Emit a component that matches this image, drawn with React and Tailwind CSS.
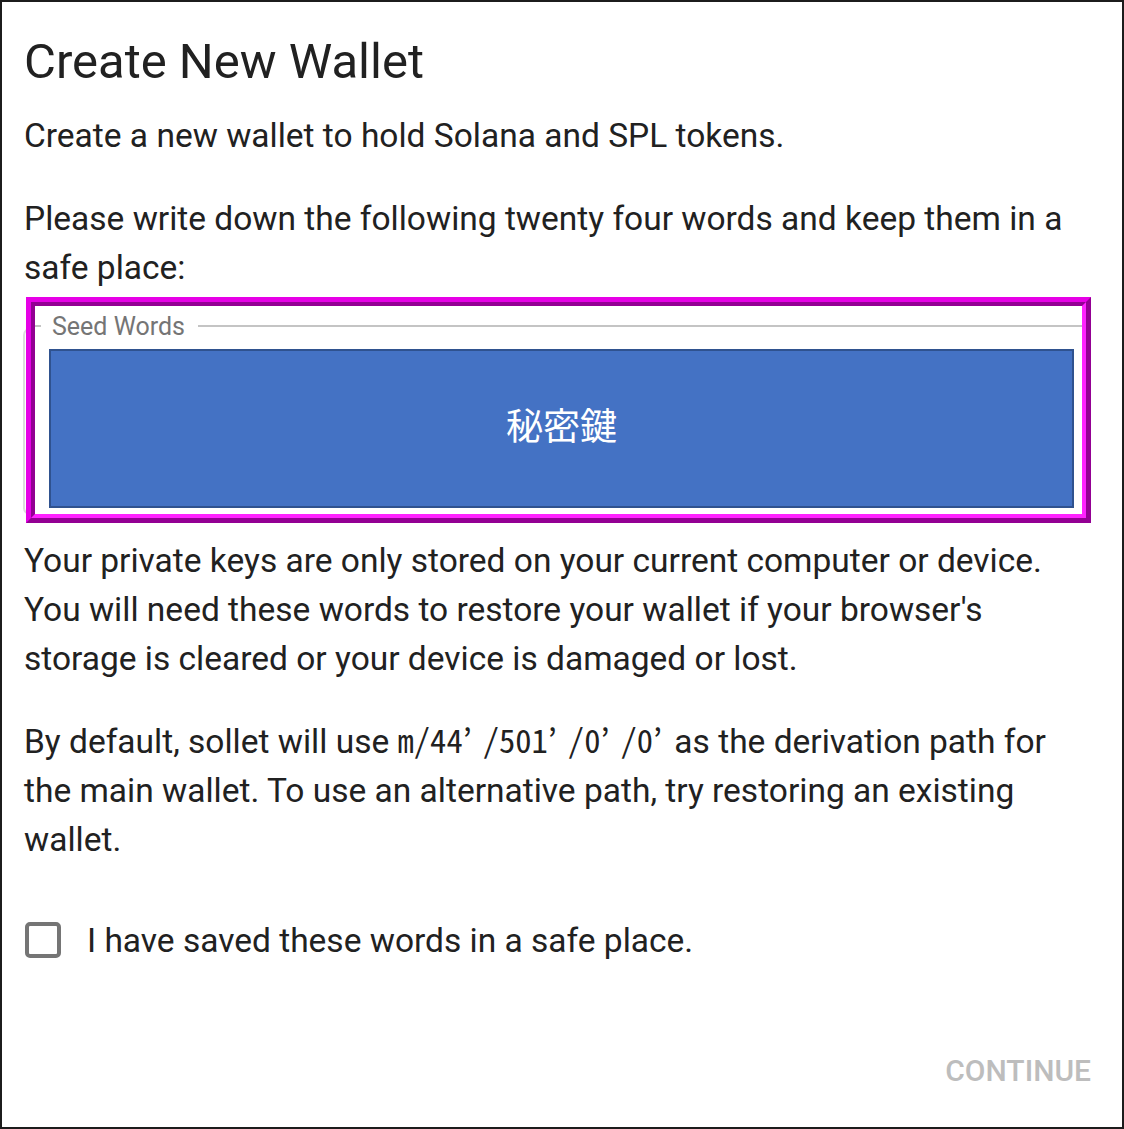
import { useState } from 'react';

const body = 'text-[33.5px] leading-[49px] text-[#212121]';

function Tick({ last }) {
  return <span className={`inline-block ${last ? 'w-[13px]' : 'w-[20px]'}`}>’</span>;
}

function SeedField() {
  return (
    <div className="relative ml-[2px] mr-[1px] mt-[5px]">
      {/* faint outline of the underlying text field */}
      <div className="absolute -left-[3px] top-[31px] bottom-[8px] w-[14px] rounded-l-[7px] border-2 border-r-0 border-[#dcdcdc]" />
      {/* highlight frame */}
      <div className="relative border-[5px] border-t-[#e600e6] border-l-[#e600e6] border-b-[#930093] border-r-[#930093]">
        <div className="border-4 border-t-[#930093] border-l-[#930093] border-b-[#ff22ff] border-r-[#ff22ff] bg-white">
          <div className="flex h-[40px] items-center">
            <div className="h-[2px] w-[6px] bg-[#c4c4c4]" />
            <span className="pl-[11px] pr-[13px] text-[25px] leading-none text-[#757575]">Seed Words</span>
            <div className="h-[2px] flex-1 bg-[#c4c4c4]" />
          </div>
          <div className="mt-[3px] mb-[6px] ml-[14px] mr-[8px] flex h-[159px] items-center justify-center border-2 border-[#2f528f] bg-[#4472c4] pb-[8px]">
            <span className="font-['Noto_Sans_CJK_JP',sans-serif] text-[37px] leading-none text-white">秘密鍵</span>
          </div>
        </div>
      </div>
    </div>
  );
}

export default function App() {
  const [saved, setSaved] = useState(false);

  return (
    <div className="box-border h-[1129px] w-[1124px] border-2 border-[#1c1c1c] bg-white pl-[22px] pr-[30px] pt-[27px] font-['Roboto',sans-serif]">
      <h1 className="text-[49px] leading-[65px] font-normal text-[#212121]">Create New Wallet</h1>
      <p className={`${body} mt-[17px]`}>Create a new wallet to hold Solana and SPL tokens.</p>
      <p className={`${body} mt-[34px]`}>Please write down the following twenty four words and keep them in a safe place:</p>

      <SeedField />

      <p className={`${body} mt-[13px]`}>
        Your private keys are only stored on your current computer or device. You will need these words to restore your wallet if your browser's storage is cleared or your device is damaged or lost.
      </p>
      <p className={`${body} mt-[34px]`}>
        By default, sollet will use{' '}
        <code className="font-['Noto_Sans_Mono_CJK_JP','Liberation_Mono',monospace] text-[32.6px] leading-none">
          m/44<Tick />/501<Tick />/0<Tick />/0<Tick last />
        </code>{' '}
        as the derivation path for the main wallet. To use an alternative path, try restoring an existing wallet.
      </p>

      <label className="mt-[58px] flex h-[36px] cursor-pointer items-center">
        <button
          type="button"
          onClick={() => setSaved(v => !v)}
          className={`ml-[1px] h-[36px] w-[36px] rounded-[5px] border-4 ${saved ? 'border-[#4472c4] bg-[#4472c4]' : 'border-[#757575] bg-white'}`}
        />
        <span className={`${body} ml-[26px]`}>I have saved these words in a safe place.</span>
      </label>

      <div className="mt-[95px] flex justify-end pr-[1px]">
        <button type="button" disabled={!saved} className="text-[30px] leading-[36px] font-medium uppercase text-[#bdbdbd]">
          Continue
        </button>
      </div>
    </div>
  );
}
